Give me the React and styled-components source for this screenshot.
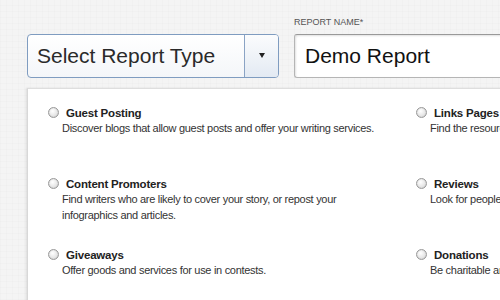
import React from 'react';
import styled, { createGlobalStyle } from 'styled-components';

const GlobalStyle = createGlobalStyle`
  html, body {
    margin: 0;
    padding: 0;
    width: 500px;
    height: 300px;
    overflow: hidden;
  }
  body {
    font-family: "Liberation Sans", Arial, sans-serif;
    background-color: #f4f4f4;
    background-image:
      repeating-linear-gradient(0deg, rgba(0, 0, 0, 0.01) 0 1px, transparent 1px 6px),
      repeating-linear-gradient(90deg, rgba(0, 0, 0, 0.01) 0 1px, transparent 1px 6px);
  }
`;

const types = [
  {
    title: 'Guest Posting',
    text: 'Discover blogs that allow guest posts and offer your writing services.'
  },
  { title: 'Links Pages', text: 'Find the resource pages that link to sites like yours.' },
  {
    title: 'Content Promoters',
    text: 'Find writers who are likely to cover your story, or repost your infographics and articles.'
  },
  { title: 'Reviews', text: 'Look for people who review products and services.' },
  { title: 'Giveaways', text: 'Offer goods and services for use in contests.' },
  { title: 'Donations', text: 'Be charitable and get links from donation pages.' }
];

const Page = styled.div`
  width: 700px;
  padding: 17px 0 0 27px;
`;

const Header = styled.div`
  display: flex;
  align-items: flex-end;
  gap: 15px;
`;

const Select = styled.div`
  display: flex;
  width: 250px;
  height: 42px;
  border: 1px solid #7f9cc0;
  border-radius: 4px;
  background: linear-gradient(#ffffff, #f4f6f9);
  overflow: hidden;
`;

const SelectText = styled.div`
  flex: 1;
  padding-left: 9px;
  font-size: 21px;
  line-height: 42px;
  color: #2a2a2a;
`;

const SelectButton = styled.div`
  width: 33px;
  border-left: 1px solid #8aa3c4;
  background: linear-gradient(#fbfcfd, #e3eaf3);
  display: flex;
  align-items: center;
  justify-content: center;

  &::after {
    content: '';
    border-left: 3.5px solid transparent;
    border-right: 3.5px solid transparent;
    border-top: 5px solid #222;
    margin-top: -1px;
  }
`;

const Field = styled.div`
  display: flex;
  flex-direction: column;
  gap: 7px;
`;

const Label = styled.label`
  font-size: 9px;
  color: #555;
  text-transform: uppercase;
`;

const Input = styled.div`
  width: 300px;
  height: 42px;
  border: 1px solid #b5b5b5;
  border-top-color: #999;
  border-right: none;
  border-radius: 3px 0 0 3px;
  background: #fff;
  box-shadow: inset 1px 1px 2px rgba(0, 0, 0, 0.12);
  padding-left: 10px;
  font-size: 21px;
  line-height: 42px;
  color: #111;
`;

const Panel = styled.div`
  margin-top: 10px;
  width: 660px;
  height: 260px;
  background: #fff;
  border-top: 1px solid #dedede;
  border-left: 1px solid #d8d8d8;
  box-shadow: -1px 0 2px rgba(0, 0, 0, 0.1);
  padding: 17px 0 0 20px;
  display: grid;
  grid-template-columns: 368px 368px;
  grid-auto-rows: 71px;
`;

const Option = styled.div`
  display: flex;
  flex-direction: column;
`;

const Title = styled.div`
  display: flex;
  align-items: center;
  gap: 7px;
  font-size: 11.5px;
  font-weight: bold;
  letter-spacing: -0.2px;
  color: #222;
  height: 13px;
`;

const Radio = styled.span`
  width: 9px;
  height: 9px;
  border-radius: 50%;
  border: 1px solid #9a9a9a;
  background: radial-gradient(circle at 40% 35%, #ffffff, #d4d4d4);
  box-shadow: inset 0 0 1px rgba(0, 0, 0, 0.2);
  flex: none;
`;

const Desc = styled.div`
  margin: 1px 0 0 14px;
  font-size: 11px;
  letter-spacing: -0.3px;
  line-height: 16px;
  color: #333;
  width: 315px;
`;

export default function App() {
  return (
    <>
      <GlobalStyle />
      <Page>
        <Header>
          <Select>
            <SelectText>Select Report Type</SelectText>
            <SelectButton />
          </Select>
          <Field>
            <Label>Report Name*</Label>
            <Input>Demo Report</Input>
          </Field>
        </Header>
        <Panel>
          {types.map((t) => (
            <Option key={t.title}>
              <Title>
                <Radio />
                {t.title}
              </Title>
              <Desc>{t.text}</Desc>
            </Option>
          ))}
        </Panel>
      </Page>
    </>
  );
}
